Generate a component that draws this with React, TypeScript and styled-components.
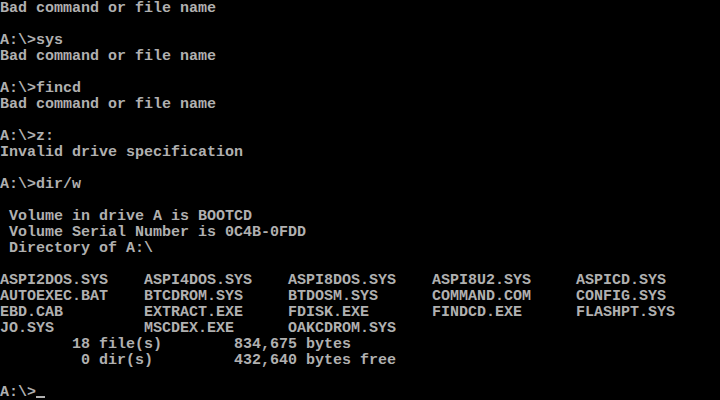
import React from "react";
import styled, { createGlobalStyle } from "styled-components";

const Global = createGlobalStyle`
  html, body { margin: 0; padding: 0; background: #000; }
  #root { width: 720px; height: 400px; }
`;

const Screen = styled.div`
  width: 720px;
  height: 400px;
  box-sizing: border-box;
  padding-top: 1px;
  background: #000;
  color: #b0b0b0;
  font-family: "Liberation Mono", "DejaVu Sans Mono", monospace;
  font-size: 15px;
  font-weight: bold;
  line-height: 16px;
  overflow: hidden;
  display: flex;
  flex-direction: column;
`;

const Line = styled.div`
  height: 16px;
  flex: none;
  white-space: pre;
`;

const Listing = styled.div`
  display: grid;
  flex: none;
  grid-template-columns: repeat(5, 144px);
  grid-auto-rows: 16px;
`;

const Entry = styled.span`
  white-space: pre;
`;

const Cursor = styled.span`
  display: inline-block;
  width: 9px;
  height: 2px;
  background: #b0b0b0;
  vertical-align: -2px;
`;

const before = [
  "Bad command or file name",
  "",
  "A:\\>sys",
  "Bad command or file name",
  "",
  "A:\\>fincd",
  "Bad command or file name",
  "",
  "A:\\>z:",
  "Invalid drive specification",
  "",
  "A:\\>dir/w",
  "",
  " Volume in drive A is BOOTCD",
  " Volume Serial Number is 0C4B-0FDD",
  " Directory of A:\\",
  "",
];

const files = [
  "ASPI2DOS.SYS",
  "ASPI4DOS.SYS",
  "ASPI8DOS.SYS",
  "ASPI8U2.SYS",
  "ASPICD.SYS",
  "AUTOEXEC.BAT",
  "BTCDROM.SYS",
  "BTDOSM.SYS",
  "COMMAND.COM",
  "CONFIG.SYS",
  "EBD.CAB",
  "EXTRACT.EXE",
  "FDISK.EXE",
  "FINDCD.EXE",
  "FLASHPT.SYS",
  "JO.SYS",
  "MSCDEX.EXE",
  "OAKCDROM.SYS",
];

const after = [
  "        18 file(s)        834,675 bytes",
  "         0 dir(s)         432,640 bytes free",
  "",
];

export default function App() {
  return (
    <>
      <Global />
      <Screen>
        {before.map((l, i) => (
          <Line key={"b" + i}>{l}</Line>
        ))}
        <Listing>
          {files.map((f) => (
            <Entry key={f}>{f}</Entry>
          ))}
        </Listing>
        {after.map((l, i) => (
          <Line key={"a" + i}>{l}</Line>
        ))}
        <Line>
          A:\&gt;
          <Cursor />
        </Line>
      </Screen>
    </>
  );
}
